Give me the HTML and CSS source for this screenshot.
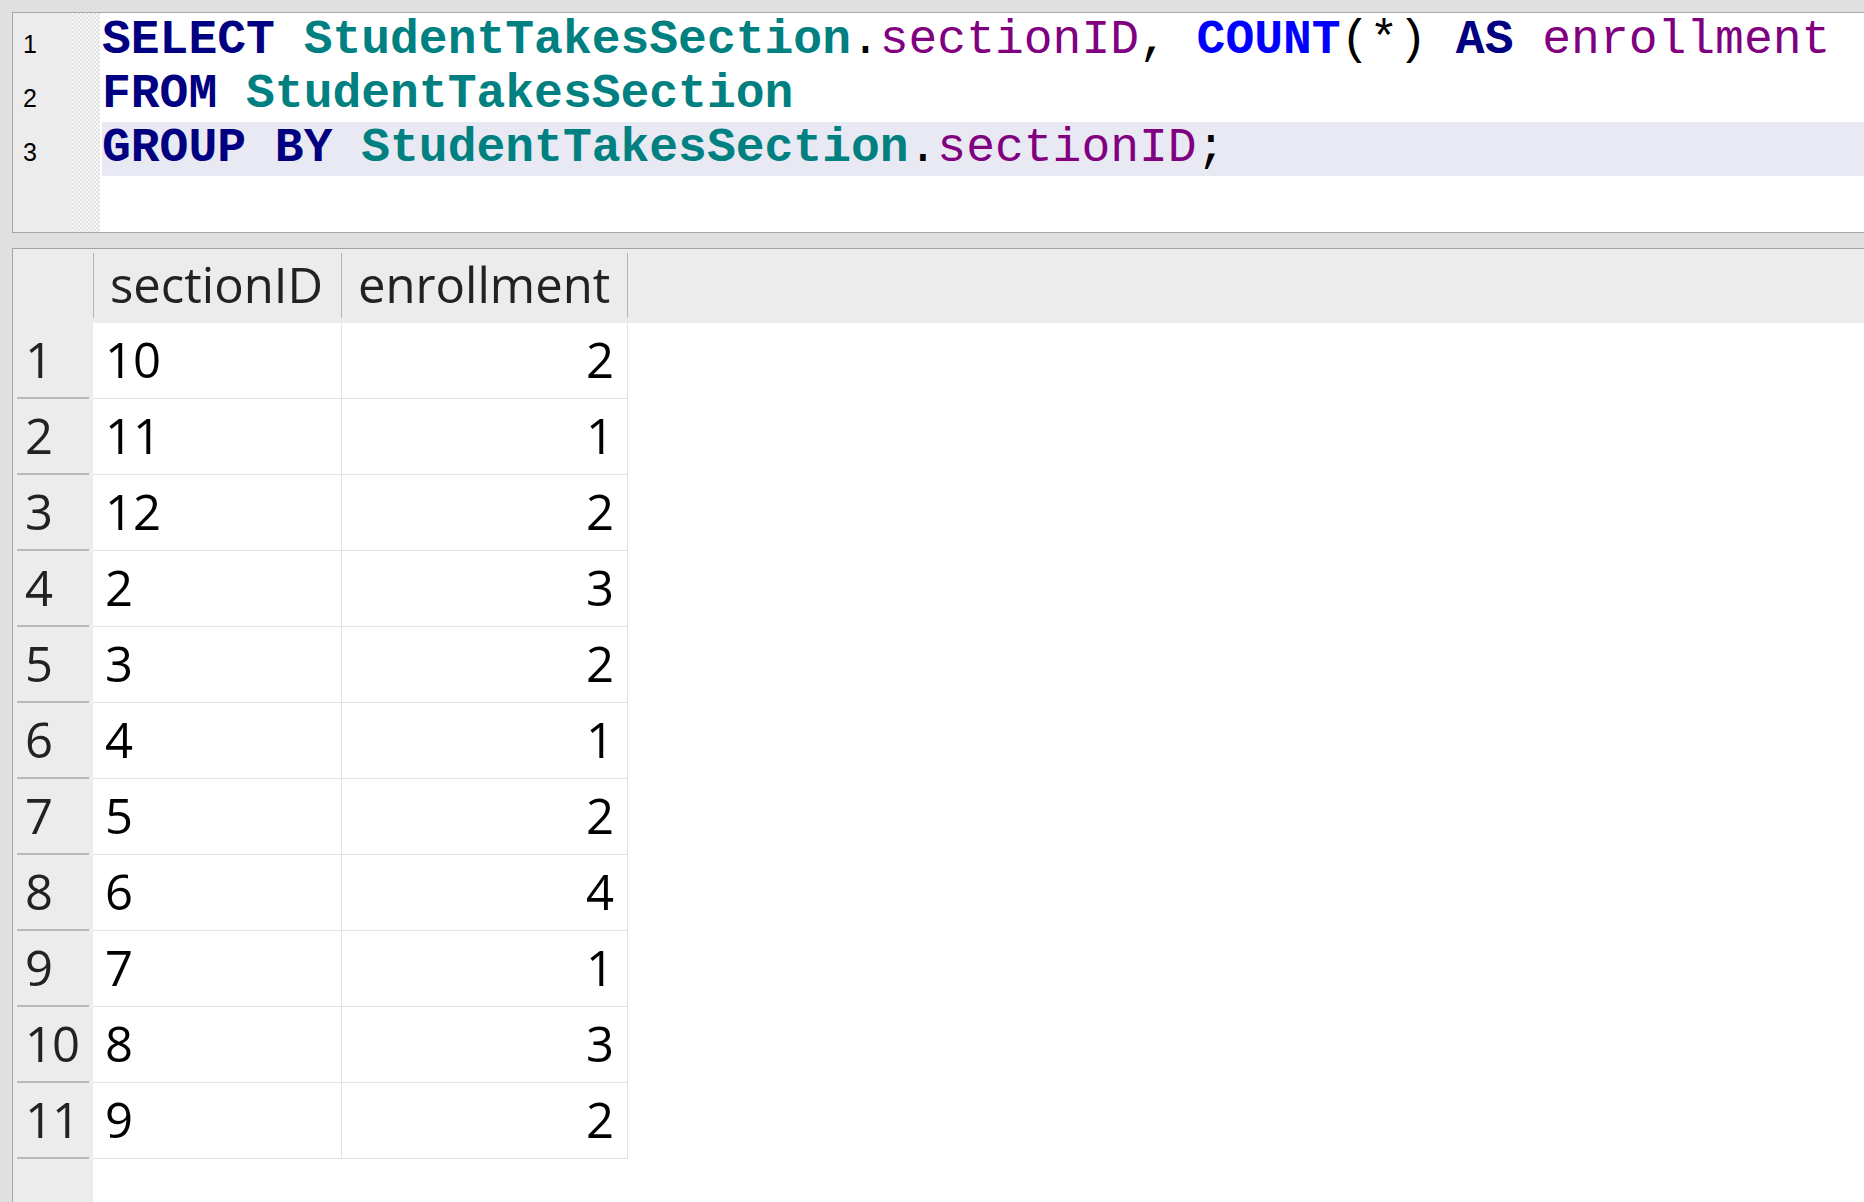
FILE: index.html
```html
<!DOCTYPE html>
<html lang="en">
<head>
<meta charset="utf-8">
<title>Query</title>
<link rel="stylesheet" href="styles.css">
</head>
<body>
<div class="app">
  <section class="editor">
    <div class="gutter">
      <div class="ln">1</div>
      <div class="ln">2</div>
      <div class="ln">3</div>
    </div>
    <div class="fold"></div>
    <div class="code">
      <div class="line"><span class="kw">SELECT</span> <span class="tbl">StudentTakesSection</span>.<span class="col">sectionID</span>, <span class="fn">COUNT</span>(*) <span class="kw">AS</span> <span class="col">enrollment</span></div>
      <div class="line"><span class="kw">FROM</span> <span class="tbl">StudentTakesSection</span></div>
      <div class="line current"><span class="kw">GROUP BY</span> <span class="tbl">StudentTakesSection</span>.<span class="col">sectionID</span>;</div>
    </div>
  </section>
  <section class="results">
    <div class="grid">
      <div class="corner"></div>
      <div class="hcell"><div class="hlabel">sectionID</div></div>
      <div class="hcell"><div class="hlabel">enrollment</div></div>
      <div class="hcell"><div class="hlabel"></div></div>

      <div class="rownum"><div class="n">1</div></div><div class="cell">10</div><div class="cell num">2</div><div class="cell rest"></div>
      <div class="rownum"><div class="n">2</div></div><div class="cell">11</div><div class="cell num">1</div><div class="cell rest"></div>
      <div class="rownum"><div class="n">3</div></div><div class="cell">12</div><div class="cell num">2</div><div class="cell rest"></div>
      <div class="rownum"><div class="n">4</div></div><div class="cell">2</div><div class="cell num">3</div><div class="cell rest"></div>
      <div class="rownum"><div class="n">5</div></div><div class="cell">3</div><div class="cell num">2</div><div class="cell rest"></div>
      <div class="rownum"><div class="n">6</div></div><div class="cell">4</div><div class="cell num">1</div><div class="cell rest"></div>
      <div class="rownum"><div class="n">7</div></div><div class="cell">5</div><div class="cell num">2</div><div class="cell rest"></div>
      <div class="rownum"><div class="n">8</div></div><div class="cell">6</div><div class="cell num">4</div><div class="cell rest"></div>
      <div class="rownum"><div class="n">9</div></div><div class="cell">7</div><div class="cell num">1</div><div class="cell rest"></div>
      <div class="rownum"><div class="n">10</div></div><div class="cell">8</div><div class="cell num">3</div><div class="cell rest"></div>
      <div class="rownum"><div class="n">11</div></div><div class="cell">9</div><div class="cell num">2</div><div class="cell rest"></div>
    </div>
  </section>
</div>
</body>
</html>
```
FILE: styles.css
```css
html, body {
  margin: 0;
  padding: 0;
}
body {
  width: 1864px;
  height: 1202px;
  overflow: hidden;
  background: #e0e0e0;
  font-family: "Open Sans", "Noto Sans", sans-serif;
}
.app {
  display: flex;
  flex-direction: column;
  height: 1202px;
  box-sizing: border-box;
  padding: 12px 0 0 12px;
}

/* ---------- SQL editor ---------- */
.editor {
  display: flex;
  height: 221px;
  box-sizing: border-box;
  border: 1px solid #a8a8a8;
  border-right: 0;
  background: #ffffff;
}
.gutter {
  width: 59px;
  flex: none;
  background: #ececec;
  padding-top: 1px;
  font-family: "Liberation Sans", Arial, sans-serif;
  font-size: 25px;
  color: #000;
}
.ln {
  height: 54px;
  box-sizing: border-box;
  padding: 6px 0 0 10px;
  line-height: 48px;
}
.fold {
  width: 28px;
  flex: none;
  background: repeating-conic-gradient(#e3e3e3 0 25%, #f7f7f7 0 50%) 0 0 / 4px 4px;
}
.code {
  flex: 1;
  padding-top: 1px;
  font-family: "Liberation Mono", "Courier New", monospace;
  font-size: 48px;
  color: #000;
}
.line {
  height: 54px;
  box-sizing: border-box;
  margin-left: 2px;
  padding-top: 4px;
  line-height: 44px;
  white-space: pre;
}
.line.current {
  background: #e9e9f4;
}
.kw  { color: #000080; font-weight: bold; }
.fn  { color: #0000ff; font-weight: bold; }
.tbl { color: #008080; font-weight: bold; }
.col { color: #800080; }

/* ---------- result grid ---------- */
.results {
  flex: 1;
  margin-top: 15px;
  border-top: 1px solid #a4a4a4;
  border-left: 1px solid #a8a8a8;
  background: linear-gradient(to right, #ececec 0 80px, #ffffff 80px);
}
.grid {
  display: grid;
  grid-template-columns: 80px 248px 286px 1fr;
  font-size: 49px;
}
.corner,
.hcell {
  height: 74px;
  box-sizing: border-box;
  background: #ececec;
}
.hcell {
  padding-top: 4px;
}
.hlabel {
  height: 65px;
  box-sizing: border-box;
  border-left: 1px solid #b4b4b4;
  padding-left: 16px;
  line-height: 62px;
  color: #222;
  white-space: nowrap;
}
.rownum {
  height: 76px;
  box-sizing: border-box;
  padding: 0 4px;
}
.rownum .n {
  height: 76px;
  box-sizing: border-box;
  border-bottom: 2px solid #b8b8b8;
  padding-left: 8px;
  line-height: 73px;
  color: #222;
  letter-spacing: -1px;
  white-space: nowrap;
}
.cell {
  height: 76px;
  box-sizing: border-box;
  border-bottom: 1px solid #e3e3e3;
  background: #ffffff;
  padding-left: 12px;
  line-height: 73px;
  color: #000;
}
.cell.num {
  border-left: 1px solid #e3e3e3;
  text-align: right;
  padding-right: 13px;
}
.cell.rest {
  border-left: 1px solid #e3e3e3;
  border-bottom: 0;
}
```
